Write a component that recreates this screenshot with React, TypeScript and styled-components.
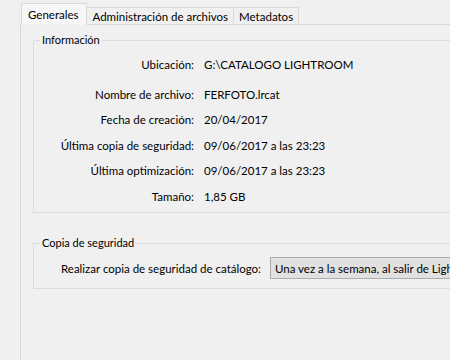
import React from 'react';
import styled, { createGlobalStyle } from 'styled-components';

const GlobalStyle = createGlobalStyle`
  html, body {
    margin: 0;
    padding: 0;
    background: #f0f0f0;
    overflow: hidden;
  }
  body {
    font-family: Lato, 'Noto Sans', sans-serif;
    font-size: 11.5px;
    color: #000;
  }
`;

const colors = {
  face: '#f0f0f0',
  tabBorder: '#d9d9d9',
  groupBorder: '#dcdcdc',
  comboFace: '#e1e1e1',
  comboBorder: '#adadad',
};

const infoRows = [
  { label: 'Ubicación:', value: 'G:\\CATALOGO LIGHTROOM' },
  { label: 'Nombre de archivo:', value: 'FERFOTO.lrcat' },
  { label: 'Fecha de creación:', value: '20/04/2017' },
  { label: 'Última copia de seguridad:', value: '09/06/2017 a las 23:23' },
  { label: 'Última optimización:', value: '09/06/2017 a las 23:23' },
  { label: 'Tamaño:', value: '1,85 GB' },
];

const tabs = ['Generales', 'Administración de archivos', 'Metadatos'];

const Page = styled.div({
  width: 450,
  height: 360,
  overflow: 'hidden',
  padding: '3px 0 0 20px',
  boxSizing: 'border-box',
  display: 'flex',
  flexDirection: 'column',
});

const TabStrip = styled.div({
  display: 'flex',
  alignItems: 'flex-end',
  height: 22,
  paddingLeft: 1,
  position: 'relative',
  zIndex: 1,
  marginBottom: -1,
});

const Tab = styled.div<{ $active?: boolean }>(({ $active }) => ({
  height: $active ? 22 : 18,
  padding: $active ? '0 8px 0 6px' : '0 5px',
  display: 'flex',
  alignItems: 'center',
  boxSizing: 'border-box',
  border: `1px solid ${colors.tabBorder}`,
  borderBottom: $active ? `1px solid ${colors.face}` : `1px solid ${colors.tabBorder}`,
  borderLeft: $active ? `1px solid ${colors.tabBorder}` : 'none',
  background: $active ? '#f7f7f7' : colors.face,
  whiteSpace: 'nowrap',
}));

const Panel = styled.div({
  flex: 1,
  width: 520,
  border: `1px solid ${colors.tabBorder}`,
  borderRight: 'none',
  borderBottom: 'none',
  padding: '8px 0 0 12px',
  display: 'flex',
  flexDirection: 'column',
  gap: 23,
});

const Group = styled.fieldset({
  margin: 0,
  border: `1px solid ${colors.groupBorder}`,
  borderRadius: 1,
  padding: '4px 0 3px 0',
  minWidth: 0,
});

const Legend = styled.legend({
  fontSize: 11,
  lineHeight: '14px',
  padding: '0 2px',
  marginLeft: 6,
});

const InfoGrid = styled.div({
  display: 'grid',
  gridTemplateColumns: '160px 1fr',
  gridTemplateRows: '29.5px repeat(5, 25.5px)',
  columnGap: 10,
  alignItems: 'start',
  paddingTop: 1,
});

const Label = styled.span({
  textAlign: 'right',
  whiteSpace: 'nowrap',
  lineHeight: '25.5px',
});

const Value = styled.span({
  whiteSpace: 'nowrap',
  lineHeight: '25.5px',
});

const BackupRow = styled.div({
  display: 'flex',
  alignItems: 'center',
  gap: 9,
  padding: '3px 0 6px 27px',
  whiteSpace: 'nowrap',
});

const Combo = styled.div({
  height: 22,
  width: 300,
  flexShrink: 0,
  boxSizing: 'border-box',
  border: `1px solid ${colors.comboBorder}`,
  background: colors.comboFace,
  display: 'flex',
  alignItems: 'center',
  paddingLeft: 4,
  overflow: 'hidden',
});

const App = () => (
  <>
    <GlobalStyle />
    <Page>
      <TabStrip>
        {tabs.map((tab, i) => (
          <Tab key={tab} $active={i === 0}>
            {tab}
          </Tab>
        ))}
      </TabStrip>

      <Panel>
        <Group>
          <Legend>Información</Legend>
          <InfoGrid>
            {infoRows.map(row => (
              <React.Fragment key={row.label}>
                <Label>{row.label}</Label>
                <Value>{row.value}</Value>
              </React.Fragment>
            ))}
          </InfoGrid>
        </Group>

        <Group>
          <Legend>Copia de seguridad</Legend>
          <BackupRow>
            <span>Realizar copia de seguridad de catálogo:</span>
            <Combo>Una vez a la semana, al salir de Lightroom</Combo>
          </BackupRow>
        </Group>
      </Panel>
    </Page>
  </>
);

export default App;
